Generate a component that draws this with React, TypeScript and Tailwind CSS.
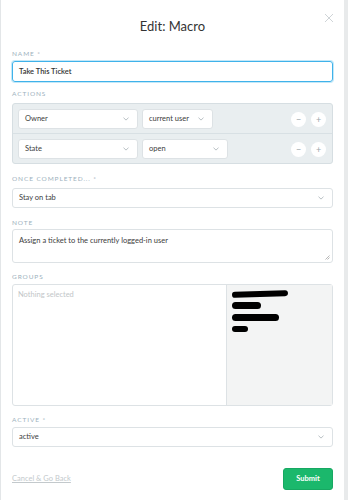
const font = { fontFamily: "Lato, 'Noto Sans', sans-serif" };

function Chevron() {
  return (
    <svg width="6" height="4" viewBox="0 0 6 4" className="shrink-0">
      <path d="M0.5 0.7 L3 3.1 L5.5 0.7" fill="none" stroke="#9aa5ab" strokeWidth="0.7" />
    </svg>
  );
}

function Label({ children }: { children: React.ReactNode }) {
  return (
    <div className="h-[12px] text-[6.5px] leading-[12px] tracking-[0.9px] uppercase text-[#9db1bd]">
      {children}
    </div>
  );
}

function Select({ value, className }: { value: string; className: string }) {
  return (
    <div
      className={`flex h-[20px] items-center justify-between rounded-[3px] border border-[#dde2e5] bg-white pl-[6px] pr-[8px] text-[7.5px] text-[#3d3d3d] ${className}`}
    >
      <span>{value}</span>
      <Chevron />
    </div>
  );
}

function RoundBtn({ sign }: { sign: string }) {
  return (
    <div className="flex h-[15px] w-[15px] items-center justify-center rounded-full bg-white text-[9px] leading-none text-[#9aa5ab]">
      {sign}
    </div>
  );
}

function ActionRow({ field, value, valueW, last }: { field: string; value: string; valueW: string; last?: boolean }) {
  return (
    <div className={`flex items-center gap-[4px] px-[5px] pb-[4px] pt-[5px] ${last ? "" : "border-b border-[#d8e0e4]"}`}>
      <Select value={field} className="w-[120px]" />
      <Select value={value} className={valueW} />
      <div className="ml-auto flex gap-[5px] pr-[1px]">
        <RoundBtn sign="−" />
        <RoundBtn sign="+" />
      </div>
    </div>
  );
}

export default function App() {
  return (
    <div className="flex h-[500px] w-[348px] bg-[#e8eaeb]" style={font}>
      <div className="relative flex h-full w-[344px] flex-col border-l border-[#e3e6e8] bg-white pl-[11px] pr-[11px]">
        <div className="flex h-[48px] items-center justify-center pt-[5px] text-[13px] text-[#333]">Edit: Macro</div>
        <svg width="10" height="10" viewBox="0 0 10 10" className="absolute right-[10px] top-[13px]">
          <path d="M1 1 L9 9 M9 1 L1 9" stroke="#c9cfd2" strokeWidth="0.9" />
        </svg>

        <Label>Name *</Label>
        <div className="mt-[1px] flex h-[21px] items-center rounded-[3px] border border-[#3fb2ea] pl-[6px] text-[7.5px] font-semibold text-[#333] ring-1 ring-[#c4e8f8]">
          Take This Ticket
        </div>

        <div className="mt-[6px]">
          <Label>Actions</Label>
        </div>
        <div className="mt-[3px] rounded-[3px] border border-[#d6dee2] bg-[#e9eef0]">
          <ActionRow field="Owner" value="current user" valueW="w-[71px]" />
          <ActionRow field="State" value="open" valueW="w-[86px]" last />
        </div>

        <div className="mt-[9px]">
          <Label>Once completed... *</Label>
        </div>
        <Select value="Stay on tab" className="mt-[3px] w-full" />

        <div className="mt-[9px]">
          <Label>Note</Label>
        </div>
        <div className="relative h-[34px] rounded-[3px] border border-[#dde2e5] px-[6px] pt-[5px] text-[7.5px] text-[#3d3d3d]">
          Assign a ticket to the currently logged-in user
          <svg width="5" height="5" viewBox="0 0 5 5" className="absolute bottom-[2px] right-[2px]">
            <path d="M0.5 4.5 L4.5 0.5 M2.5 4.5 L4.5 2.5" stroke="#888" strokeWidth="0.6" />
          </svg>
        </div>

        <div className="mt-[8px]">
          <Label>Groups</Label>
        </div>
        <div className="mt-[1px] flex h-[122px] rounded-[3px] border border-[#dde2e5]">
          <div className="w-[214px] border-r border-[#dde2e5] px-[5px] pt-[4px] text-[7.5px] text-[#c2c6c8]">
            Nothing selected
          </div>
          <div className="flex flex-1 flex-col gap-[5px] bg-[#f3f4f4] pl-[5px] pt-[6px]">
            <div className="h-[6px] w-[56px] -rotate-2 rounded-full bg-black" />
            <div className="h-[7px] w-[29px] rounded-full bg-black" />
            <div className="h-[7px] w-[47px] rounded-full bg-black" />
            <div className="h-[6px] w-[16px] rounded-full bg-black" />
          </div>
        </div>

        <div className="mt-[8px]">
          <Label>Active *</Label>
        </div>
        <Select value="active" className="mt-[1px] w-full" />

        <div className="mt-[21px] flex items-center justify-between">
          <span className="text-[7.5px] text-[#c3c9cc] underline">Cancel &amp; Go Back</span>
          <div className="flex h-[22px] w-[50px] items-center justify-center rounded-[3px] border border-[#17a862] bg-[#1bb86c] text-[7.5px] font-bold text-white">
            Submit
          </div>
        </div>
      </div>
    </div>
  );
}
